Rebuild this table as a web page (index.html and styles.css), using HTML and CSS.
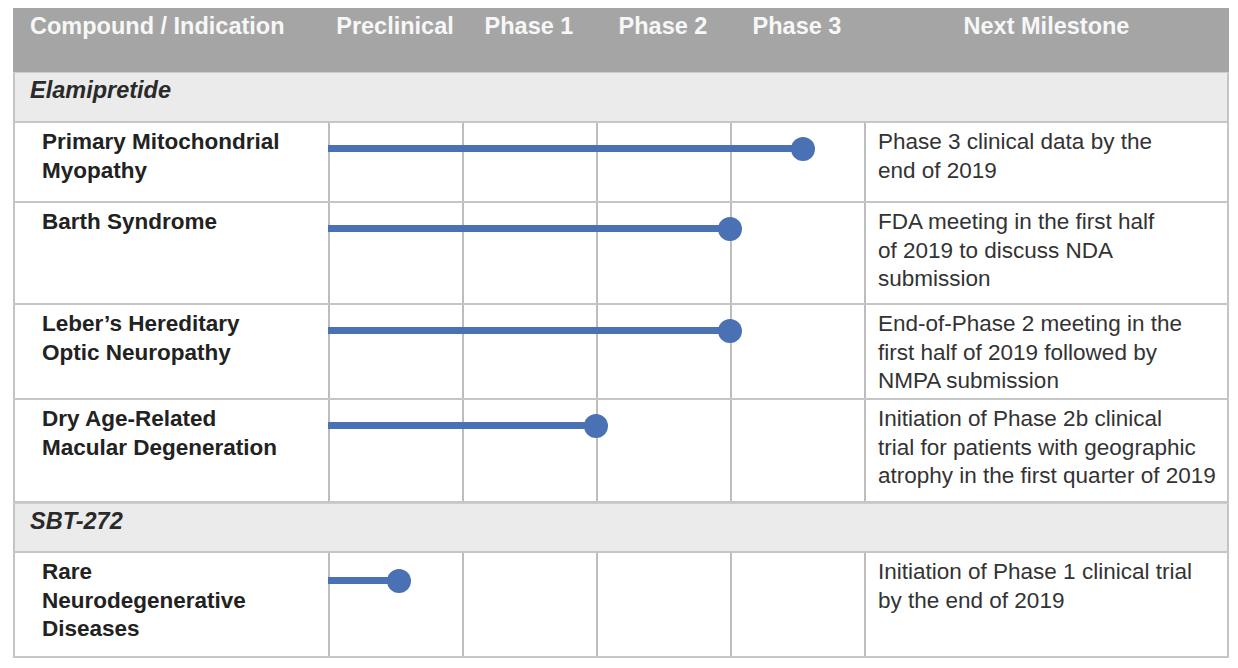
FILE: index.html
```html
<!DOCTYPE html>
<html lang="en">
<head>
<meta charset="utf-8">
<title>Pipeline</title>
<link rel="stylesheet" href="styles.css">
</head>
<body>
<div class="pipeline">
  <div class="row head">
    <div class="h-name">Compound / Indication</div>
    <div class="h-phases">
      <div class="h-phase">Preclinical</div>
      <div class="h-phase">Phase 1</div>
      <div class="h-phase">Phase 2</div>
      <div class="h-phase">Phase 3</div>
    </div>
    <div class="h-mile">Next Milestone</div>
  </div>

  <div class="row section"><div class="sec-name">Elamipretide</div></div>

  <div class="row item">
    <div class="name">Primary Mitochondrial<br>Myopathy</div>
    <div class="phases">
      <div class="cell"></div><div class="cell"></div><div class="cell"></div><div class="cell"></div>
      <div class="bar" style="width: 475px"></div>
    </div>
    <div class="mile">Phase 3 clinical data by the<br>end of 2019</div>
  </div>

  <div class="row item">
    <div class="name">Barth Syndrome</div>
    <div class="phases">
      <div class="cell"></div><div class="cell"></div><div class="cell"></div><div class="cell"></div>
      <div class="bar" style="width: 402px"></div>
    </div>
    <div class="mile">FDA meeting in the first half<br>of 2019 to discuss NDA<br>submission</div>
  </div>

  <div class="row item">
    <div class="name">Leber’s Hereditary<br>Optic Neuropathy</div>
    <div class="phases">
      <div class="cell"></div><div class="cell"></div><div class="cell"></div><div class="cell"></div>
      <div class="bar" style="width: 402px"></div>
    </div>
    <div class="mile">End-of-Phase 2 meeting in the<br>first half of 2019 followed by<br>NMPA submission</div>
  </div>

  <div class="row item">
    <div class="name">Dry Age-Related<br>Macular Degeneration</div>
    <div class="phases">
      <div class="cell"></div><div class="cell"></div><div class="cell"></div><div class="cell"></div>
      <div class="bar" style="width: 268px"></div>
    </div>
    <div class="mile">Initiation of Phase 2b clinical<br>trial for patients with geographic<br>atrophy in the first quarter of 2019</div>
  </div>

  <div class="row section"><div class="sec-name">SBT-272</div></div>

  <div class="row item last">
    <div class="name">Rare<br>Neurodegenerative<br>Diseases</div>
    <div class="phases">
      <div class="cell"></div><div class="cell"></div><div class="cell"></div><div class="cell"></div>
      <div class="bar bar-low" style="width: 71px"></div>
    </div>
    <div class="mile">Initiation of Phase 1 clinical trial<br>by the end of 2019</div>
  </div>
</div>
</body>
</html>
```

FILE: styles.css
```css
html, body {
  margin: 0;
  padding: 0;
  background: #ffffff;
}

body {
  font-family: "Liberation Sans", Arial, Helvetica, sans-serif;
  color: #262626;
}

.pipeline {
  margin: 8px 0 0 13px;
  width: 1216px;
  display: grid;
  grid-template-rows: 64px 51px 80px 102px 95px 103px 50px 105px;
}

.row {
  display: grid;
  grid-template-columns: 315px 536px 365px;
  box-sizing: border-box;
}

.head {
  background: #a5a5a5;
  color: #f7f7f7;
  font-weight: bold;
  font-size: 23.5px;
  line-height: 28px;
}

.h-name {
  padding: 4px 0 0 17px;
  white-space: nowrap;
}

.h-phases {
  display: grid;
  grid-template-columns: repeat(4, 134px);
}

.h-phase {
  padding-top: 4px;
  text-align: center;
  white-space: nowrap;
}

.h-mile {
  padding-top: 4px;
  text-align: center;
}

.section {
  display: block;
  background: #ebebeb;
  box-shadow: inset 2px 0 0 #c4c4c4, inset -2px 0 0 #c4c4c4;
  border-bottom: 2px solid #c6c6c6;
  border-top: 1px solid #cdcdcd;
}

.sec-name {
  padding: 3px 0 0 17px;
  font-size: 23.5px;
  line-height: 28px;
  font-weight: bold;
  font-style: italic;
  color: #2a2a2a;
}

.item {
  box-shadow: inset 2px 0 0 #c4c4c4, inset -2px 0 0 #c4c4c4;
  border-bottom: 2px solid #c6c6c6;
  font-size: 22.5px;
  line-height: 28.5px;
}

.name {
  padding: 5px 0 0 29px;
  font-weight: bold;
  white-space: nowrap;
  color: #222222;
}

.phases {
  position: relative;
  display: flex;
}

.cell {
  width: 134px;
  border-left: 2px solid #bdbdbd;
  box-sizing: border-box;
}

.bar {
  position: absolute;
  left: 0;
  top: 22px;
  height: 7px;
  background: #4a71b3;
}

.bar::after {
  content: "";
  position: absolute;
  right: -12px;
  top: -8.5px;
  width: 24px;
  height: 24px;
  border-radius: 50%;
  background: #4a71b3;
}

.bar-low {
  top: 24px;
}

.mile {
  border-left: 2px solid #bdbdbd;
  padding: 5px 0 0 12px;
  white-space: nowrap;
  color: #333333;
}
```
